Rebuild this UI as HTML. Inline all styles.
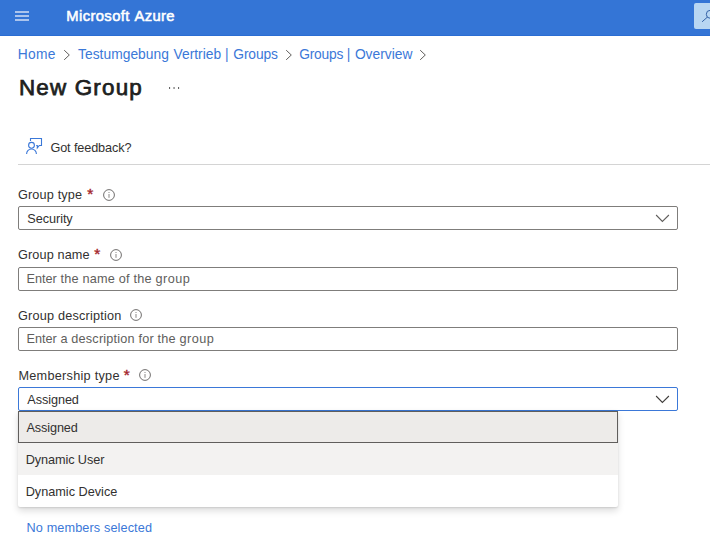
<!DOCTYPE html>
<html><head><meta charset="utf-8">
<style>
html,body{margin:0;padding:0;}
body{width:710px;height:550px;overflow:hidden;background:#fff;position:relative;font-family:"Liberation Sans",sans-serif;color:#323130;font-size:12.7px;}
.abs{position:absolute;white-space:nowrap;line-height:1;}
.t{position:absolute;white-space:nowrap;line-height:1;}
#hdr{left:0;top:0;width:710px;height:35px;background:#3475d6;border-bottom:1px solid #2a6dd3;}
.hb{left:15px;width:14px;height:2px;background:#abc4ed;}
#brand{left:66.3px;top:9px;font-size:14.8px;font-weight:normal;-webkit-text-stroke:0.55px #fff;color:#fff;letter-spacing:0.38px;word-spacing:1px;}
#search{left:694px;top:3px;width:20px;height:26px;background:#b8d6f2;border-radius:2px;}
.bc{top:47.5px;font-size:13.8px;color:#3b78d8;}
.sep{top:47px;}
#title{left:18.9px;top:77px;font-size:22.4px;font-weight:normal;-webkit-text-stroke:0.75px #201f1e;color:#201f1e;letter-spacing:1.2px;}
#dots{left:167px;top:80px;font-size:12px;color:#605e5c;}
#fb{left:50.4px;top:142px;color:#323130;letter-spacing:-0.12px;}
#hr{left:18px;top:164px;width:692px;height:1px;background:#d4d4d4;}
.lbl{left:18px;color:#323130;}
.req{color:#a4262c;}
.star{font-size:15.5px;font-weight:normal;-webkit-text-stroke:0.4px #a4262c;margin-left:0.3px;margin-top:-0.7px;}
.box{left:18px;width:658px;height:22px;border:1px solid #7f7d7b;border-radius:2px;background:#fff;}
.ph{color:#605e5c;}
#dd{left:18px;top:411px;width:600px;height:96px;background:#fff;box-shadow:0 3.2px 7.2px 0 rgba(0,0,0,.132),0 0.6px 1.8px 0 rgba(0,0,0,.108);border-radius:2px;}
.opt{left:0;width:600px;height:32px;}
#nomem{left:26.6px;top:521.5px;color:#3b78d8;letter-spacing:0.11px;}
</style></head><body>
<div id="hdr" class="abs"></div>
<div class="abs hb" style="top:11px"></div>
<div class="abs hb" style="top:15px"></div>
<div class="abs hb" style="top:19px"></div>
<div id="brand" class="t">Microsoft Azure</div>
<div id="search" class="abs"></div>
<svg class="abs" style="left:700px;top:8px" width="12" height="16" viewBox="0 0 12 16"><circle cx="10.3" cy="6.3" r="4" fill="none" stroke="#3462a6" stroke-width="1"/><path d="M2.1 13.8 L7.4 9.1" stroke="#3462a6" stroke-width="1" fill="none"/></svg>

<div id="bc1" class="t bc" style="left:17.7px;letter-spacing:0.3px">Home</div>
<div id="bc2" class="t bc" style="left:78.1px;letter-spacing:0.02px">Testumgebung <span style="margin-left:0.8px">Vertrieb</span> | <span style="margin-left:0.8px;letter-spacing:-0.15px">Groups</span></div>
<div id="bc3" class="t bc" style="left:299.3px;letter-spacing:-0.1px"><span style="letter-spacing:-0.25px">Groups</span> | <span style="margin-left:0.9px;letter-spacing:0px">Overview</span></div>
<svg class="abs" style="left:60px;top:48px" width="14" height="14" viewBox="0 0 14 14"><path d="M4.2 2.2 L9.3 7 L4.2 11.8" fill="none" stroke="#605e5c" stroke-width="1"/></svg>
<svg class="abs" style="left:282px;top:48px" width="14" height="14" viewBox="0 0 14 14"><path d="M4.2 2.2 L9.3 7 L4.2 11.8" fill="none" stroke="#605e5c" stroke-width="1"/></svg>
<svg class="abs" style="left:416px;top:48px" width="14" height="14" viewBox="0 0 14 14"><path d="M4.2 2.2 L9.3 7 L4.2 11.8" fill="none" stroke="#605e5c" stroke-width="1"/></svg>

<div id="title" class="t">New Group</div>
<svg class="abs" style="left:165px;top:84px" width="18" height="8" viewBox="0 0 18 8"><rect x="4" y="3.1" width="1.1" height="1.8" fill="#555"/><rect x="8.5" y="3.1" width="1.1" height="1.8" fill="#555"/><rect x="13" y="3.1" width="1.1" height="1.8" fill="#555"/></svg>

<svg class="abs" style="left:20px;top:132px" width="30" height="28" viewBox="0 0 30 28" fill="none" stroke="#3b78d8" stroke-width="1.1"><path d="M10.5 8.9 V6.5 H21.5 V13.5 H19.3 L17.3 15.9 V13.5 H16.2"/><circle cx="11.5" cy="13.3" r="2.9"/><path d="M6.6 21.9 A4.9 4.9 0 0 1 16.4 21.9"/></svg>
<div id="fb" class="t">Got feedback?</div>
<div id="hr" class="abs"></div>

<div id="l1" class="t lbl" style="top:189px;letter-spacing:0.14px">Group type</div><div id="s1" class="t req star" style="left:86.9px;top:187px">*</div>
<div class="abs box" style="top:206px"></div>
<div id="v1" class="t" style="left:27.3px;top:213px;letter-spacing:-0.06px">Security</div>
<div id="l2" class="t lbl" style="top:249px;letter-spacing:0.12px">Group name</div><div id="s2" class="t req star" style="left:94px;top:247px">*</div>
<div class="abs box" style="top:267px"></div>
<div id="v2" class="t ph" style="left:26.6px;top:273px;letter-spacing:0.21px"><span style="letter-spacing:-0.05px">Enter</span> the name of the <span style="letter-spacing:0.45px">group</span></div>
<div id="l3" class="t lbl" style="top:310px;letter-spacing:0.2px">Group description</div>
<div class="abs box" style="top:327px"></div>
<div id="v3" class="t ph" style="left:26.6px;top:333px;letter-spacing:0.19px"><span style="letter-spacing:-0.05px">Enter</span> a description for the <span style="letter-spacing:0.45px">group</span></div>
<div id="l4" class="t lbl" style="left:18.4px;top:370px;letter-spacing:0.27px">Membership type</div><div id="s4" class="t req star" style="left:123.5px;top:368px">*</div>
<div class="abs box" style="top:387px;border-color:#3b78d8;"></div>
<div id="v4" class="t" style="left:27.3px;top:394px;letter-spacing:-0.08px">Assigned</div>

<svg class="abs ic" style="left:102px;top:188px" width="14" height="14" viewBox="0 0 14 14"><circle cx="7" cy="7" r="5.4" fill="none" stroke="#605e5c" stroke-width="0.9"/><rect x="6.5" y="6" width="1" height="3.8" fill="#8a8886"/><rect x="6.5" y="4" width="1" height="1" fill="#8a8886"/></svg>
<svg class="abs ic" style="left:109px;top:248px" width="14" height="14" viewBox="0 0 14 14"><circle cx="7" cy="7" r="5.4" fill="none" stroke="#605e5c" stroke-width="0.9"/><rect x="6.5" y="6" width="1" height="3.8" fill="#8a8886"/><rect x="6.5" y="4" width="1" height="1" fill="#8a8886"/></svg>
<svg class="abs ic" style="left:129px;top:308px" width="14" height="14" viewBox="0 0 14 14"><circle cx="7" cy="7" r="5.4" fill="none" stroke="#605e5c" stroke-width="0.9"/><rect x="6.5" y="6" width="1" height="3.8" fill="#8a8886"/><rect x="6.5" y="4" width="1" height="1" fill="#8a8886"/></svg>
<svg class="abs ic" style="left:137.7px;top:368.3px" width="14" height="14" viewBox="0 0 14 14"><circle cx="7" cy="7" r="5.4" fill="none" stroke="#605e5c" stroke-width="0.9"/><rect x="6.5" y="6" width="1" height="3.8" fill="#8a8886"/><rect x="6.5" y="4" width="1" height="1" fill="#8a8886"/></svg>

<svg class="abs" style="left:654px;top:212px" width="17" height="12" viewBox="0 0 17 12"><path d="M2.1 3 L8.4 9.4 L14.9 3" fill="none" stroke="#605e5c" stroke-width="1.1"/></svg>
<svg class="abs" style="left:654px;top:392.9px" width="17" height="12" viewBox="0 0 17 12"><path d="M2.1 3 L8.4 9.4 L14.9 3" fill="none" stroke="#403e3c" stroke-width="1.1"/></svg>

<div id="dd" class="abs">
 <div class="abs opt" style="top:0;background:#edebe9;box-sizing:border-box;border:1px solid #605e5c;"></div>
 <div class="abs opt" style="top:32px;background:#f3f2f1;"></div>
 <div class="abs opt" style="top:64px;"></div>
</div>
<div id="o1" class="t" style="left:26.5px;top:422px;letter-spacing:-0.12px">Assigned</div>
<div id="o2" class="t" style="left:25.7px;top:454px;letter-spacing:-0.09px">Dynamic User</div>
<div id="o3" class="t" style="left:25.7px;top:486px">Dynamic Device</div>
<div id="nomem" class="t">No members selected</div>
</body></html>
